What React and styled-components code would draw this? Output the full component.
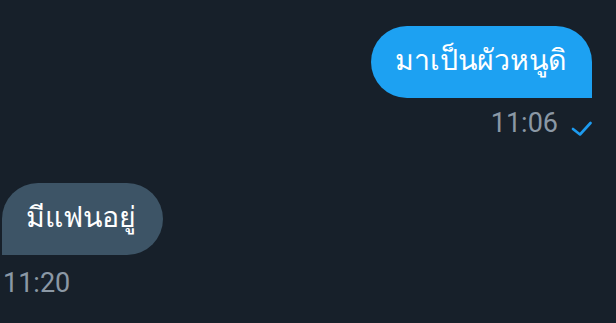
import React from 'react';
import styled, { createGlobalStyle } from 'styled-components';

const GlobalStyle = createGlobalStyle`
  html, body {
    margin: 0;
    padding: 0;
    background: #17202a;
  }
  body {
    font-family: Roboto, "Noto Sans", sans-serif;
  }
`;

const Chat = styled.div`
  width: 616px;
  height: 323px;
  box-sizing: border-box;
  padding: 26px 24px 0 2px;
  display: flex;
  flex-direction: column;
  overflow: hidden;
`;

const Group = styled.div`
  display: flex;
  flex-direction: column;
  align-items: ${(p) => (p.$out ? 'flex-end' : 'flex-start')};
  margin-bottom: ${(p) => p.$gap || 0}px;
`;

const Bubble = styled.div`
  height: 72px;
  box-sizing: border-box;
  display: flex;
  align-items: center;
  padding: 0 ${(p) => (p.$out ? 25 : 27)}px 4px 24px;
  font-size: 28.5px;
  color: #ffffff;
  background: ${(p) => (p.$out ? '#1da1f2' : '#3d5466')};
  border-radius: ${(p) => (p.$out ? '36px 36px 0 36px' : '36px 36px 36px 0')};
`;

const Meta = styled.div`
  display: flex;
  gap: 13px;
  margin-top: ${(p) => (p.$out ? 9 : 12)}px;
  font-size: 27px;
  color: #8b98a5;
  padding-left: ${(p) => (p.$out ? 0 : 1)}px;
`;

const CheckSvg = styled.svg`
  align-self: flex-end;
  margin-bottom: 3px;
  width: 21px;
  height: 15px;
`;

const Check = () => (
  <CheckSvg viewBox="0 0 21 15" fill="none">
    <path d="M2 8 L9 13.5 L19.5 2" stroke="#1d9bf0" strokeWidth="2.6" strokeLinecap="round" strokeLinejoin="round" />
  </CheckSvg>
);

export default function App() {
  return (
    <>
      <GlobalStyle />
      <Chat>
        <Group $out $gap={44}>
          <Bubble $out>มาเป็นผัวหนูดิ</Bubble>
          <Meta $out>
            11:06
            <Check />
          </Meta>
        </Group>
        <Group>
          <Bubble>มีแฟนอยู่</Bubble>
          <Meta>11:20</Meta>
        </Group>
      </Chat>
    </>
  );
}
